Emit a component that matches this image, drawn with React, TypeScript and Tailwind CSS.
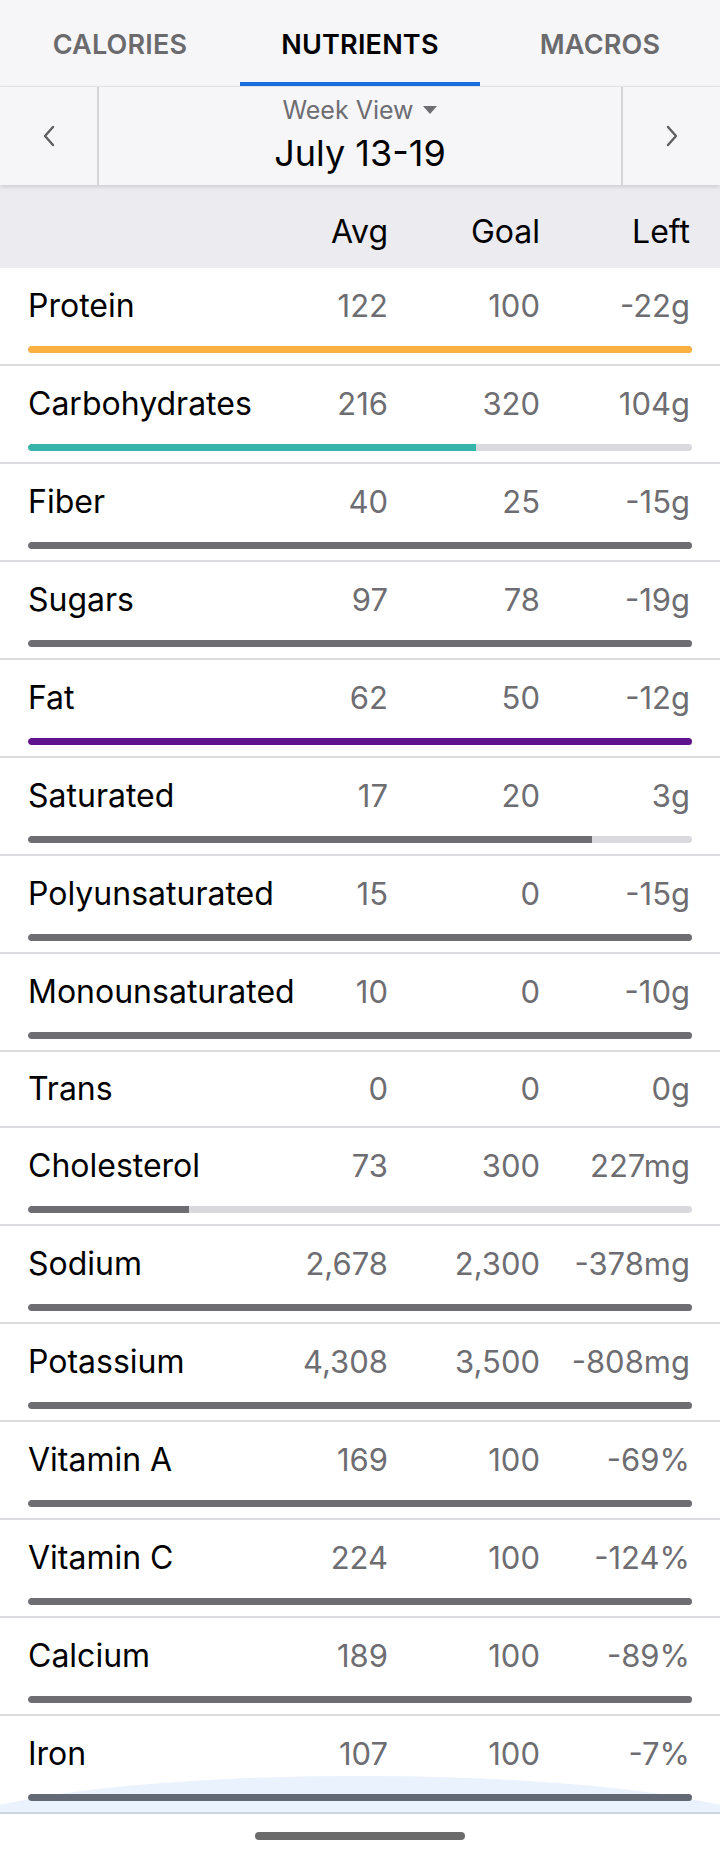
import React from "react";

type Row = {
  label: string;
  avg: string;
  goal: string;
  left: string;
  pct?: number;
  color?: string;
};

const rows: Row[] = [
  { label: "Protein", avg: "122", goal: "100", left: "-22g", pct: 100, color: "bg-[#fbb040]" },
  { label: "Carbohydrates", avg: "216", goal: "320", left: "104g", pct: 67.5, color: "bg-[#35b5aa]" },
  { label: "Fiber", avg: "40", goal: "25", left: "-15g", pct: 100 },
  { label: "Sugars", avg: "97", goal: "78", left: "-19g", pct: 100 },
  { label: "Fat", avg: "62", goal: "50", left: "-12g", pct: 100, color: "bg-[#5f138e]" },
  { label: "Saturated", avg: "17", goal: "20", left: "3g", pct: 85 },
  { label: "Polyunsaturated", avg: "15", goal: "0", left: "-15g", pct: 100 },
  { label: "Monounsaturated", avg: "10", goal: "0", left: "-10g", pct: 100 },
  { label: "Trans", avg: "0", goal: "0", left: "0g" },
  { label: "Cholesterol", avg: "73", goal: "300", left: "227mg", pct: 24.3 },
  { label: "Sodium", avg: "2,678", goal: "2,300", left: "-378mg", pct: 100 },
  { label: "Potassium", avg: "4,308", goal: "3,500", left: "-808mg", pct: 100 },
  { label: "Vitamin A", avg: "169", goal: "100", left: "-69%", pct: 100 },
  { label: "Vitamin C", avg: "224", goal: "100", left: "-124%", pct: 100 },
  { label: "Calcium", avg: "189", goal: "100", left: "-89%", pct: 100 },
  { label: "Iron", avg: "107", goal: "100", left: "-7%", pct: 100 },
];

function Values({ r }: { r: Row }) {
  return (
    <div className="flex items-center h-[36px] leading-[36px] whitespace-nowrap">
      <span className="flex-1 min-w-0 text-black">{r.label}</span>
      <span className="w-[120px] text-right text-[#6d6d72] text-[31px]">{r.avg}</span>
      <span className="w-[152px] text-right text-[#6d6d72] text-[31px]">{r.goal}</span>
      <span className="w-[150px] text-right text-[#6d6d72] text-[31px]">{r.left}</span>
    </div>
  );
}

function NutrientRow({ r, last }: { r: Row; last?: boolean }) {
  if (r.pct === undefined) {
    return (
      <div className="h-[76px] flex flex-col justify-center pl-[28px] pr-[30px] border-b-2 border-[#dcdce0]">
        <Values r={r} />
      </div>
    );
  }
  return (
    <div
      className={
        "relative overflow-hidden h-[98px] pt-[20px] pl-[28px] pr-[28px] border-b-2 " +
        (last ? "border-[#cdd5e0]" : "border-[#dcdce0]")
      }
    >
      {last && (
        <div className="absolute left-[-60px] right-[-60px] top-[60px] h-[120px] rounded-[50%] bg-[#eaf2fd]" />
      )}
      <div className="relative pr-[2px]">
        <Values r={r} />
      </div>
      <div className="relative mt-[22px] h-[7px] rounded-full bg-[#d9d9de] overflow-hidden">
        <div
          className={"h-full rounded-l-full " + (r.color ?? (last ? "bg-[#636974]" : "bg-[#6d6d72]"))}
          style={{ width: `${r.pct}%` }}
        />
      </div>
    </div>
  );
}

export default function App() {
  return (
    <div
      className="w-[720px] h-[1856px] bg-white overflow-hidden text-[32px]"
      style={{ fontFamily: "Inter, 'Noto Sans', sans-serif" }}
    >
      {/* Tabs */}
      <div className="h-[86px] bg-[#f6f6f8] grid grid-cols-3 text-[27px] font-semibold tracking-[0.2px]">
        <div className="flex flex-col">
          <div className="flex-1 flex items-center justify-center pt-[8px] text-[#6b6b6e]">CALORIES</div>
          <div className="h-[4px]" />
        </div>
        <div className="flex flex-col">
          <div className="flex-1 flex items-center justify-center pt-[8px] text-black">NUTRIENTS</div>
          <div className="h-[4px] bg-[#1a6ee0]" />
        </div>
        <div className="flex flex-col">
          <div className="flex-1 flex items-center justify-center pt-[8px] text-[#6b6b6e]">MACROS</div>
          <div className="h-[4px]" />
        </div>
      </div>

      {/* Week nav */}
      <div className="relative z-10 h-[99px] bg-[#f6f6f8] flex border-t border-[#e2e2e6] shadow-[0_2px_4px_rgba(0,0,0,0.12)]">
        <div className="w-[99px] flex items-center justify-center border-r-2 border-[#d6d6da]">
          <svg width="14" height="22" viewBox="0 0 14 22" fill="none">
            <path d="M11 2 L3 11 L11 20" stroke="#5f5f62" strokeWidth="2.4" strokeLinecap="round" strokeLinejoin="round" />
          </svg>
        </div>
        <div className="flex-1 flex flex-col items-center pt-[7px]">
          <div className="flex items-center gap-[8px] text-[25px] leading-[32px] text-[#6d6d72]">
            Week View
            <svg width="16" height="10" viewBox="0 0 16 10">
              <path d="M1 1 L15 1 L8 9 Z" fill="#6d6d72" />
            </svg>
          </div>
          <div className="text-[36px] leading-[44px] text-black mt-[5px]">July 13-19</div>
        </div>
        <div className="w-[99px] flex items-center justify-center border-l-2 border-[#d6d6da]">
          <svg width="14" height="22" viewBox="0 0 14 22" fill="none">
            <path d="M3 2 L11 11 L3 20" stroke="#5f5f62" strokeWidth="2.4" strokeLinecap="round" strokeLinejoin="round" />
          </svg>
        </div>
      </div>

      {/* Column header */}
      <div className="h-[83px] bg-[#ebebf0] flex items-end pb-[18px] pl-[28px] pr-[30px] leading-[36px] text-black">
        <span className="flex-1" />
        <span className="w-[120px] text-right">Avg</span>
        <span className="w-[152px] text-right">Goal</span>
        <span className="w-[150px] text-right">Left</span>
      </div>

      {/* Rows */}
      <div>
        {rows.map((r, i) => (
          <NutrientRow key={r.label} r={r} last={i === rows.length - 1} />
        ))}
      </div>

      {/* Home indicator */}
      <div className="h-[42px] bg-white flex justify-center pt-[18px]">
        <div className="w-[210px] h-[8px] rounded-full bg-[#6b6b6b]" />
      </div>
    </div>
  );
}
